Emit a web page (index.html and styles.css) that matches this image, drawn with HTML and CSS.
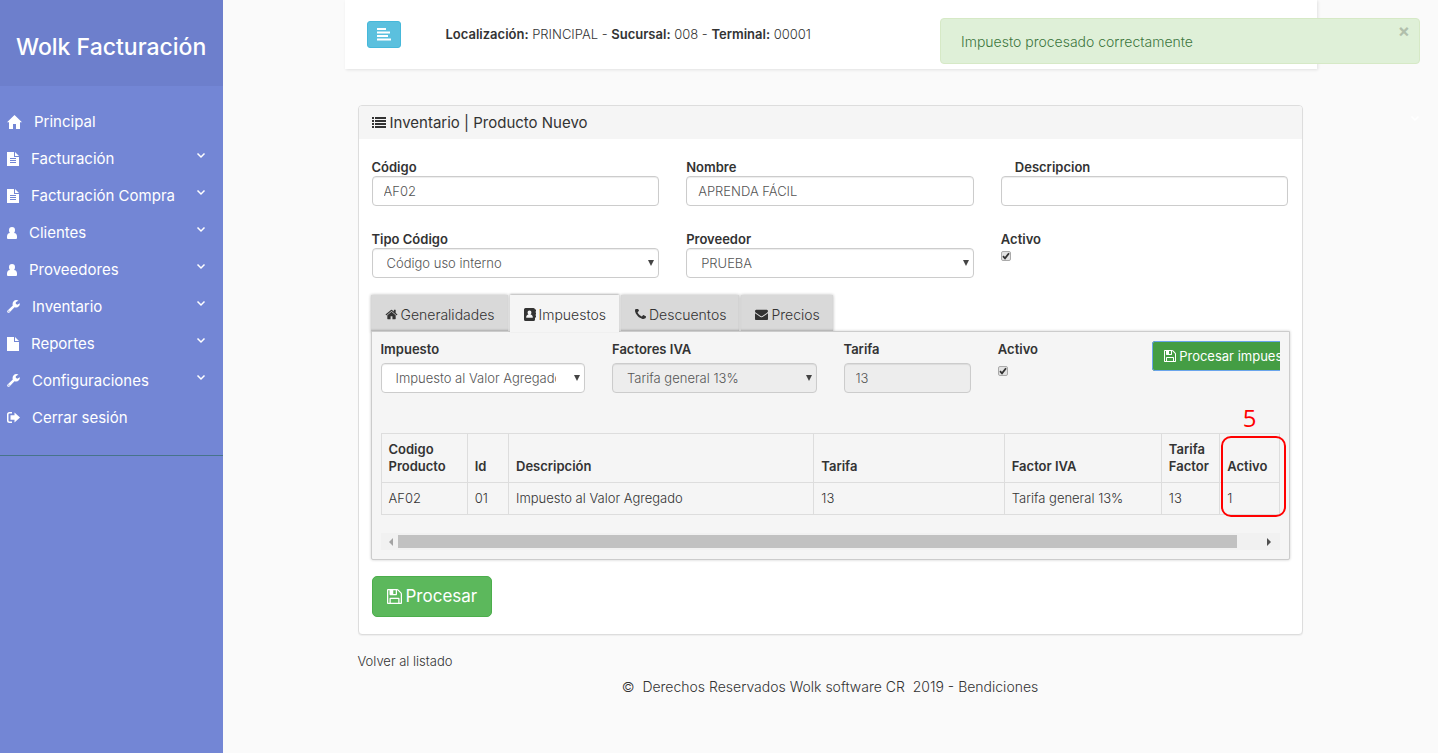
FILE: index.html
```html
<!DOCTYPE html>
<html lang="es">
<head>
<meta charset="utf-8">
<meta name="viewport" content="width=device-width, initial-scale=1">
<title>Wolk Facturación</title>
<link rel="stylesheet" href="styles.css">
</head>
<body>
<svg class="sprite" aria-hidden="true">
  <symbol id="i-house" viewBox="0 0 15 14"><path d="M7.500 0 15 7.200H13V14H9V9H6V14H2V7.200H0Z"/></symbol>
  <symbol id="i-file-text" viewBox="0 0 12 14"><path fill-rule="evenodd" d="M0 0H7V5H12V14H0ZM8 0 12 4H8ZM3 6V7H9V6ZM3 8V9H9V8ZM3 10V11H9V10Z"/></symbol>
  <symbol id="i-file" viewBox="0 0 12 14"><path d="M0 0H7V5H12V14H0ZM8 0 12 4H8Z"/></symbol>
  <symbol id="i-user" viewBox="0 0 10 12"><path d="M5 0C7 0 8 1.300 8 3S7.500 5.400 7 6C9 6.200 10 7.500 10 9.500V11Q10 12 9 12H1Q0 12 0 11V9.500C0 7.500 1 6.200 3 6 2.500 5.400 2 4.700 2 3S3 0 5 0Z"/></symbol>
  <symbol id="i-wrench" viewBox="0 0 13 13"><path fill-rule="evenodd" d="M12.800 3.200C13.200 5.500 11.500 7.600 9.200 7.600 8.600 7.600 8 7.500 7.500 7.200L2.500 12.400C1.900 13 1.100 13 .6 12.400S0 11.100.6 10.500L5.800 5.500C4.900 2.800 6.700 0 9.400 0 10.200 0 11 .200 11.500.600L8.800 2.200V3.800L10.200 4.700ZM1.900 10.600A.6.6 0 1 0 1.900 11.800.6.6 0 0 0 1.900 10.600Z"/></symbol>
  <symbol id="i-out" viewBox="0 0 13 11"><path d="M5 0V1.500H2.500Q1.500 1.500 1.500 2.500V8.500Q1.500 9.500 2.500 9.500H5V11H2.500Q0 11 0 8.500V2.500Q0 0 2.500 0ZM7.500.5 13 5.500 7.500 10.500V7.700H3.500V3.300H7.500Z"/></symbol>
  <symbol id="i-chevron" viewBox="0 0 10 7"><path d="M1.500 1.500 5 5 8.500 1.500" fill="none" stroke="currentColor" stroke-width="1.500"/></symbol>
  <symbol id="i-align" viewBox="0 0 14 13"><path d="M0 0H9V2H0ZM0 3.500H13V5.500H0ZM0 7H11V9H0ZM0 10.500H14V12.500H0Z"/></symbol>
  <symbol id="i-list" viewBox="0 0 14 12"><path d="M0 0H2V2H0ZM3 0H14V2H3ZM0 3H2V5H0ZM3 3H14V5H3ZM0 6H2V8H0ZM3 6H14V8H3ZM0 9H2V11H0ZM3 9H14V11H3Z"/></symbol>
  <symbol id="i-home" viewBox="0 0 1792 1792"><path d="M1472 992v480q0 26-19 45t-45 19h-384v-384h-256v384h-384q-26 0-45-19t-19-45v-480q0-1 .5-3t.5-3l575-474 575 474q1 2 1 6zm223-69l-62 74q-8 9-21 11h-3q-13 0-21-7l-692-577-692 577q-12 8-24 7-13-2-21-11l-62-74q-8-10-7-23.500t11-21.500l719-599q32-26 76-26t76 26l244 204v-195q0-14 9-23t23-9h192q14 0 23 9t9 23v408l219 182q10 8 11 21.500t-7 23.500z"/></symbol>
  <symbol id="i-book" viewBox="0 0 12 13"><path fill-rule="evenodd" d="M1.500 0H9.500Q11 0 11 1.500H12V3.500H11.500V4.500H12V6.500H11.500V7.500H12V9.500H11V11.500Q11 13 9.500 13H1.500Q0 13 0 11.500V1.500Q0 0 1.500 0ZM5.500 2.500C4.300 2.500 3.600 3.400 3.600 4.600 3.600 5.500 4 6.200 4.500 6.600 3 6.800 2.200 7.700 2.200 9.800H8.800C8.800 7.700 8 6.800 6.500 6.600 7 6.200 7.400 5.500 7.400 4.600 7.400 3.400 6.700 2.500 5.500 2.500Z"/></symbol>
  <symbol id="i-phone" viewBox="192 256 1408 1408"><path d="M1600 1240q0 27-10 70.500t-21 68.500q-21 50-122 106-94 51-186 51-27 0-53-3.500t-57.500-12.500-47-14.500-55.500-20.500-49-18q-98-35-175-83-127-79-264-216t-216-264q-48-77-83-175-3-9-18-49t-20.500-55.500-14.500-47-12.500-57.500-3.500-53q0-92 51-186 56-101 106-122 25-11 68.500-21t70.500-10q14 0 21 3 18 6 53 76 11 19 30 54t35 63.500 31 53.500q3 4 17.500 25t21.500 35.500 7 28.500q0 20-28.500 50t-62 55-62 53-28.500 46q0 9 5 22.500t8.500 20.500 14 24 11.500 19q76 137 174 235t235 174q2 1 19 11.500t24 14 20.500 8.500 22.500 5q18 0 46-28.500t53-62 55-62 50-28.500q14 0 28.500 7t35.500 21.500 25 17.500q25 15 53.500 31t63.500 35 54 30q70 35 76 53 3 7 3 21z"/></symbol>
  <symbol id="i-mail" viewBox="0 0 1792 1792"><path d="M1792 710v794q0 66-47 113t-113 47h-1472q-66 0-113-47t-47-113v-794q44 49 101 87 362 246 497 345 57 42 92.500 65.500t94.500 48 110 24.500h2q51 0 110-24.500t94.500-48 92.500-65.500q170-123 498-345 57-39 100-87zm0-294q0 79-49 151t-122 123q-376 261-468 325-10 7-42.500 31t-54 38.500-52 32.500-57.500 27-50 9h-2q-23 0-50-9t-57.500-27-52-32.500-54-38.500-42.500-31q-91-64-262-182.500t-205-142.500q-62-42-117-115.500t-55-136.500q0-78 41.500-130t118.500-52h1472q65 0 112.500 47t47.500 113z"/></symbol>
  <symbol id="i-save" viewBox="128 128 1536 1536"><path d="M512 1536h768v-384h-768v384zm896 0h128v-896q0-14-10-38.500t-20-34.500l-281-281q-10-10-34-20t-39-10v416q0 40-28 68t-68 28h-576q-40 0-68-28t-28-68v-416h-128v1280h128v-416q0-40 28-68t68-28h832q40 0 68 28t28 68v416zm-384-928v-320q0-13-9.500-22.500t-22.500-9.500h-192q-13 0-22.500 9.500t-9.500 22.500v320q0 13 9.500 22.500t22.500 9.500h192q13 0 22.500-9.500t9.500-22.500zm640 32v928q0 40-28 68t-68 28h-1344q-40 0-68-28t-28-68v-1344q0-40 28-68t68-28h928q40 0 88 20t76 48l280 280q28 28 48 76t20 88z"/></symbol>
</svg>

<div class="layout">
  <nav class="sidebar">
    <div class="brand">Wolk Facturación</div>
    <ul class="menu">
      <li><a href="#"><svg width="15" height="14"><use href="#i-house"/></svg>Principal</a></li>
      <li><a href="#"><svg width="12" height="14"><use href="#i-file-text"/></svg>Facturación<svg class="chevron"><use href="#i-chevron"/></svg></a></li>
      <li><a href="#"><svg width="12" height="14"><use href="#i-file-text"/></svg>Facturación Compra<svg class="chevron"><use href="#i-chevron"/></svg></a></li>
      <li><a href="#"><svg width="10" height="12"><use href="#i-user"/></svg>Clientes<svg class="chevron"><use href="#i-chevron"/></svg></a></li>
      <li><a href="#"><svg width="10" height="12"><use href="#i-user"/></svg>Proveedores<svg class="chevron"><use href="#i-chevron"/></svg></a></li>
      <li><a href="#"><svg width="13" height="13"><use href="#i-wrench"/></svg>Inventario<svg class="chevron"><use href="#i-chevron"/></svg></a></li>
      <li><a href="#"><svg width="12" height="14"><use href="#i-file"/></svg>Reportes<svg class="chevron"><use href="#i-chevron"/></svg></a></li>
      <li><a href="#"><svg width="13" height="13"><use href="#i-wrench"/></svg>Configuraciones<svg class="chevron"><use href="#i-chevron"/></svg></a></li>
      <li><a href="#"><svg width="13" height="11"><use href="#i-out"/></svg>Cerrar sesión</a></li>
    </ul>
  </nav>

  <div class="content">
    <header class="topbar">
      <button class="toggle" type="button" aria-label="Menú"><svg width="14" height="13"><use href="#i-align"/></svg></button>
      <p class="location"><b>Localización:</b> PRINCIPAL - <b>Sucursal:</b> 008 - <b>Terminal:</b> 00001</p>
    </header>

    <main class="main">
      <form class="panel">
        <h1 class="panel-heading"><svg width="14" height="12"><use href="#i-list"/></svg>Inventario | Producto Nuevo</h1>
        <div class="panel-body">
          <div class="fields">
            <div class="field"><label for="codigo">Código</label><input class="control" id="codigo" type="text" value="AF02"></div>
            <div class="field"><label for="nombre">Nombre</label><input class="control" id="nombre" type="text" value="APRENDA FÁCIL"></div>
            <div class="field"><label class="indent" for="desc">Descripcion</label><input class="control" id="desc" type="text"></div>
            <div class="field"><label for="tipo">Tipo Código</label><div class="select"><select class="control" id="tipo"><option>Código uso interno</option></select></div></div>
            <div class="field"><label for="prov">Proveedor</label><div class="select"><select class="control" id="prov"><option>PRUEBA</option></select></div></div>
            <div class="field"><label for="activo">Activo</label><input class="check" id="activo" type="checkbox" checked></div>
          </div>

          <div class="tabs" role="tablist">
            <button class="tab" type="button" role="tab"><svg width="13" height="13"><use href="#i-home"/></svg>Generalidades</button>
            <button class="tab active" type="button" role="tab" aria-selected="true"><svg width="12" height="13"><use href="#i-book"/></svg>Impuestos</button>
            <button class="tab" type="button" role="tab"><svg width="11" height="11"><use href="#i-phone"/></svg>Descuentos</button>
            <button class="tab" type="button" role="tab"><svg width="13" height="13"><use href="#i-mail"/></svg>Precios</button>
          </div>

          <section class="pane">
            <div class="scroller">
              <div class="tax-fields">
                <div class="field wide"><label for="imp">Impuesto</label><div class="select"><select class="control" id="imp"><option>Impuesto al Valor Agregado</option></select></div></div>
                <div class="field wide"><label for="iva">Factores IVA</label><div class="select"><select class="control" id="iva" disabled><option>Tarifa general 13%</option></select></div></div>
                <div class="field"><label for="tarifa">Tarifa</label><input class="control" id="tarifa" type="text" value="13" disabled></div>
                <div class="field"><label for="activo2">Activo</label><input class="check" id="activo2" type="checkbox" checked></div>
                <div class="field"><button class="btn-tax" type="button"><svg width="12" height="12"><use href="#i-save"/></svg>Procesar impuesto</button></div>
              </div>
              <table class="grid">
                <colgroup><col class="c-code"><col class="c-id"><col class="c-desc"><col class="c-rate"><col class="c-iva"><col class="c-factor"><col class="c-active"></colgroup>
                <thead><tr><th>Codigo Producto</th><th>Id</th><th>Descripción</th><th>Tarifa</th><th>Factor IVA</th><th>Tarifa Factor</th><th>Activo</th></tr></thead>
                <tbody><tr><td>AF02</td><td>01</td><td>Impuesto al Valor Agregado</td><td>13</td><td>Tarifa general 13%</td><td>13</td><td>1</td></tr></tbody>
              </table>
              <div class="scrollbar" aria-hidden="true"><span class="arrow left"></span><span class="track"><span class="thumb"></span></span><span class="arrow right"></span></div>
            </div>
            <div class="callout"><span class="callout-number">5</span></div>
          </section>

          <button class="btn-save" type="submit"><svg width="15" height="15"><use href="#i-save"/></svg>Procesar</button>
        </div>
      </form>
      <a class="back" href="#">Volver al listado</a>
      <footer class="footer">©&nbsp; Derechos Reservados Wolk software CR&nbsp; 2019 - Bendiciones</footer>
    </main>
  </div>
</div>

<div class="alert" role="alert">Impuesto procesado correctamente<button class="close" type="button" aria-label="Cerrar">×</button></div>
<svg class="page-chevron" width="10" height="7" aria-hidden="true"><use href="#i-chevron"/></svg>
</body>
</html>
```

FILE: styles.css
```css
* { box-sizing: border-box; }

body {
  margin: 0;
  background: #fafafa;
  color: #333;
  font: 300 13px/17px Inter, "Open Sans", sans-serif;
}

button, input, select { font: inherit; color: inherit; }
a { color: inherit; text-decoration: none; }
svg { fill: currentColor; flex: none; }
.sprite { position: absolute; width: 0; height: 0; }
b, label, th { font-weight: 600; }

.layout { display: flex; min-height: 100vh; }

/* Sidebar */
.sidebar { flex: none; width: 223px; background: #7386d5; color: #fff; }
.brand {
  padding: 36px 16px 28px;
  background: #6d7fcc;
  font-size: 23px;
  font-weight: 500;
  line-height: 22px;
  white-space: nowrap;
}
.menu {
  margin: 0;
  padding: 17px 0 19px;
  border-bottom: 1px solid #47748b;
  list-style: none;
  font-size: 15px;
  font-weight: 400;
}
.menu a { display: flex; align-items: center; gap: 12px; height: 37px; padding: 0 17px 0 7px; }
.chevron { width: 10px; height: 7px; margin: 0 0 6px auto; }

/* Content */
.content { flex: 1; min-width: 0; padding: 0 calc((100% - 223px) / 10); }
.topbar {
  display: flex;
  align-items: center;
  gap: 45px;
  height: 69px;
  padding: 0 22px;
  background: #fff;
  box-shadow: 1px 1px 3px rgba(0, 0, 0, .1);
}
.toggle {
  display: grid;
  place-items: center;
  width: 34px;
  height: 27px;
  padding: 0;
  border: 1px solid #46b8da;
  border-radius: 3px;
  background: #5bc0de;
  color: #fff;
}
.location { margin: 0; }
.main { padding: 36px 14px 0 13px; }

.panel { border: 1px solid #ddd; border-radius: 4px; background: #fff; box-shadow: 0 1px 1px rgba(0, 0, 0, .05); }
.panel-heading {
  display: flex;
  align-items: center;
  gap: 4px;
  height: 33px;
  margin: 0;
  padding: 0 13px;
  border-radius: 3px 3px 0 0;
  background: #f5f5f5;
  font-size: 15px;
  font-weight: 400;
}
.panel-body { padding: 20px 13px 17px; }
.fields { display: grid; grid-template-columns: repeat(3, 1fr); gap: 25px 27px; }
.field { display: flex; flex-direction: column; align-items: flex-start; min-width: 0; }
.indent { margin-left: 14px; }

.control {
  display: block;
  width: 100%;
  height: 30px;
  margin: 0;
  padding: 0 11px;
  border: 1px solid #ccc;
  border-radius: 4px;
  background: #fff;
  color: #555;
  box-shadow: inset 0 1px 1px rgba(0, 0, 0, .075);
}
.control:disabled { background: #ededed; opacity: 1; }
.select { position: relative; width: 100%; }
.select .control { padding: 0 28px 0 14px; appearance: none; }
.select::after {
  content: "";
  position: absolute;
  top: 12px;
  right: 5px;
  border: 3px solid transparent;
  border-top: 6px solid #444;
  border-bottom: 0;
}
.check {
  appearance: none;
  width: 10px;
  height: 10px;
  margin: 3px 0 0;
  border: 1px solid #aaa;
  border-radius: 2px;
  background: #e2e2e2 url("data:image/svg+xml,%3Csvg xmlns='http://www.w3.org/2000/svg' viewBox='0 0 8 8'%3E%3Cpath d='M1 4.200 3 6.300 7 1.200' fill='none' stroke='%23333' stroke-width='1.800'/%3E%3C/svg%3E") center / 8px no-repeat;
}

/* Tabs */
.tabs { display: flex; gap: 2px; margin: 17px 0 0 -1px; }
.tab {
  display: flex;
  align-items: center;
  gap: 3px;
  height: 37px;
  padding: 2px 13px 0 14px;
  border: 0;
  background: #d9d9d9;
  box-shadow: 0 0 3px rgba(0, 0, 0, .3), inset 0 -3px 3px -2px rgba(0, 0, 0, .25);
  font-size: 14px;
}
.tab.active { position: relative; z-index: 1; background: #f5f5f5; box-shadow: 0 -1px 2px rgba(0, 0, 0, .3); }
.pane {
  position: relative;
  margin: -1px -1px 16px;
  padding: 9px;
  border: 1px solid #ccc;
  border-radius: 0 0 2px 2px;
  background: #f5f5f5;
  box-shadow: 0 0 3px rgba(0, 0, 0, .2);
}
.scroller { overflow: hidden; }
.tax-fields { display: grid; grid-template-columns: repeat(12, minmax(0, 1fr)); column-gap: 27px; margin-bottom: 40px; }
.tax-fields .field { grid-column: span 2; gap: 5px; }
.tax-fields .wide { grid-column: span 3; }
.btn-tax {
  display: flex;
  align-items: center;
  gap: 3px;
  height: 30px;
  padding: 0 11px;
  border: 1px solid #398439;
  border-radius: 3px;
  outline: 1px solid #6aa5ec;
  outline-offset: -1px;
  background: #449d44;
  color: #fff;
  font-weight: 400;
  white-space: nowrap;
}

.grid { width: 100%; table-layout: fixed; border-collapse: collapse; }
.grid th, .grid td { padding: 7px; border: 1px solid #ddd; text-align: left; vertical-align: bottom; }
.c-code { width: 9.6%; }
.c-id { width: 4.6%; }
.c-desc { width: 34%; }
.c-rate { width: 21.2%; }
.c-iva { width: 17.5%; }
.c-factor { width: 6.5%; }
.c-active { width: 6.6%; }

.scrollbar { display: flex; align-items: center; height: 17px; margin-top: 18px; background: #f1f1f1; }
.arrow { width: 17px; }
.arrow::before { content: ""; display: block; width: 4px; margin: 0 auto; border: 4px solid transparent; }
.left::before { border-right-color: #a3a3a3; border-left: 0; }
.right::before { border-left-color: #505050; border-right: 0; }
.track { flex: 1; }
.thumb { display: block; width: 97%; height: 13px; background: #c1c1c1; }

.callout {
  position: absolute;
  top: 104px;
  right: 3px;
  width: 65px;
  height: 81px;
  border: 2px solid #f00;
  border-radius: 10px;
}
.callout-number {
  position: absolute;
  right: 27px;
  bottom: 81px;
  color: #f00;
  font: 400 24px/32px "Open Sans", sans-serif;
}

.btn-save {
  display: flex;
  align-items: center;
  gap: 4px;
  height: 41px;
  padding: 0 14px;
  border: 1px solid #4cae4c;
  border-radius: 5px;
  background: #5cb85c;
  color: #fff;
  font-size: 17px;
  font-weight: 400;
}
.back { display: block; width: max-content; margin-top: 18px; }
.footer { margin-top: 8px; font-size: 14px; text-align: center; }

.alert {
  position: absolute;
  top: 18px;
  right: 18px;
  width: 480px;
  padding: 14px 20px 13px;
  border: 1px solid #d6e9c6;
  border-radius: 4px;
  background: #dff0d8;
  color: #3c763d;
  font-size: 14px;
}
.close {
  position: absolute;
  top: 3px;
  right: 9px;
  padding: 0;
  border: 0;
  background: none;
  color: #000;
  font-size: 18px;
  font-weight: 700;
  opacity: .2;
}
.page-chevron { position: absolute; top: 115px; right: 18px; color: #fff; }
```
